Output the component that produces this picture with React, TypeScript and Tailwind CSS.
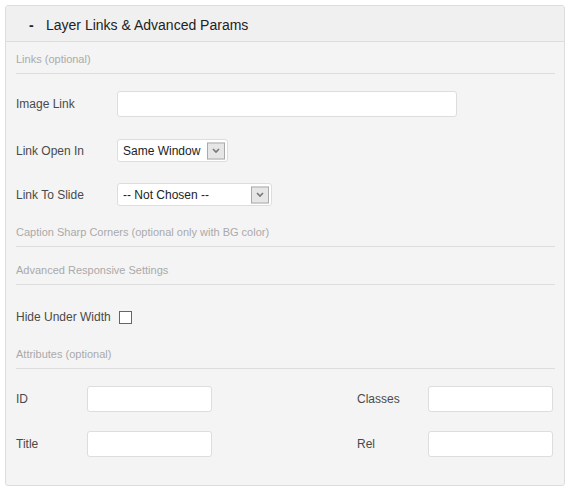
import React from 'react';

const font = { fontFamily: '"Liberation Sans", Arial, sans-serif' };

const SectionTitle: React.FC<{ text: string; className?: string }> = ({ text, className }) => (
  <div className={`pb-[7px] border-b border-[#dddddd] text-[11px] leading-[14px] text-[#aaaaaa] ${className ?? ''}`}>
    {text}
  </div>
);

const Arrow: React.FC = () => (
  <div className="absolute right-[2px] top-1/2 -translate-y-1/2 w-[18px] h-[17px] border border-[#aaaaaa] bg-[#e6e6e6] flex items-center justify-center">
    <svg width="8" height="6" viewBox="0 0 8 6">
      <path d="M1 1.5 L4 4.5 L7 1.5" fill="none" stroke="#777777" strokeWidth="1.6" />
    </svg>
  </div>
);

const Select: React.FC<{ value: string; width: string }> = ({ value, width }) => (
  <div className={`relative ${width} h-[23px] bg-white border border-[#dddddd] rounded-[3px] flex items-center pl-[5px] text-[12px] text-[#222222]`}>
    {value}
    <Arrow />
  </div>
);

const TextBox: React.FC<{ width: string }> = ({ width }) => (
  <div className={`${width} h-[26px] bg-white border border-[#dddddd] rounded-[3px]`} />
);

export default function App() {
  return (
    <div className="pt-[5px] pl-[5px]" style={font}>
      <div className="w-[560px] border border-[#dddddd] rounded-[3px] bg-[#f4f4f4] overflow-hidden">
        <div className="h-[36px] pt-[3px] bg-[#f0f0f0] border-b border-[#dddddd] flex items-center text-[14px] text-[#222222]">
          <span className="ml-[23px] w-[17px] font-bold">-</span>
          <span>Layer Links &amp; Advanced Params</span>
        </div>

        <div className="pl-[10px] pr-[9px] pb-[28px]">
          <SectionTitle text="Links (optional)" className="mt-[10px]" />

          <div className="mt-[17px] h-[26px] flex items-center text-[12px] text-[#4a4a4a]">
            <span className="w-[101px]">Image Link</span>
            <TextBox width="w-[340px]" />
          </div>
          <div className="mt-[22px] h-[23px] flex items-center text-[12px] text-[#4a4a4a]">
            <span className="w-[101px]">Link Open In</span>
            <Select value="Same Window" width="w-[111px]" />
          </div>
          <div className="mt-[21px] h-[23px] flex items-center text-[12px] text-[#4a4a4a]">
            <span className="w-[101px]">Link To Slide</span>
            <Select value="-- Not Chosen --" width="w-[155px]" />
          </div>

          <SectionTitle text="Caption Sharp Corners (optional only with BG color)" className="mt-[19px]" />
          <SectionTitle text="Advanced Responsive Settings" className="mt-[16px]" />

          <div className="mt-[25px] h-[14px] flex items-center text-[12px] text-[#4a4a4a]">
            <span>Hide Under Width</span>
            <div className="ml-[8px] w-[13px] h-[13px] border border-[#666666] bg-white" />
          </div>

          <SectionTitle text="Attributes (optional)" className="mt-[23px]" />

          <div className="mt-[17px] flex flex-col gap-[19px] text-[12px] text-[#4a4a4a]">
            <div className="flex justify-between pr-[2px]">
              <div className="flex items-center">
                <span className="w-[71px]">ID</span>
                <TextBox width="w-[125px]" />
              </div>
              <div className="flex items-center">
                <span className="w-[71px]">Classes</span>
                <TextBox width="w-[125px]" />
              </div>
            </div>
            <div className="flex justify-between pr-[2px]">
              <div className="flex items-center">
                <span className="w-[71px]">Title</span>
                <TextBox width="w-[125px]" />
              </div>
              <div className="flex items-center">
                <span className="w-[71px]">Rel</span>
                <TextBox width="w-[125px]" />
              </div>
            </div>
          </div>
        </div>
      </div>
    </div>
  );
}
